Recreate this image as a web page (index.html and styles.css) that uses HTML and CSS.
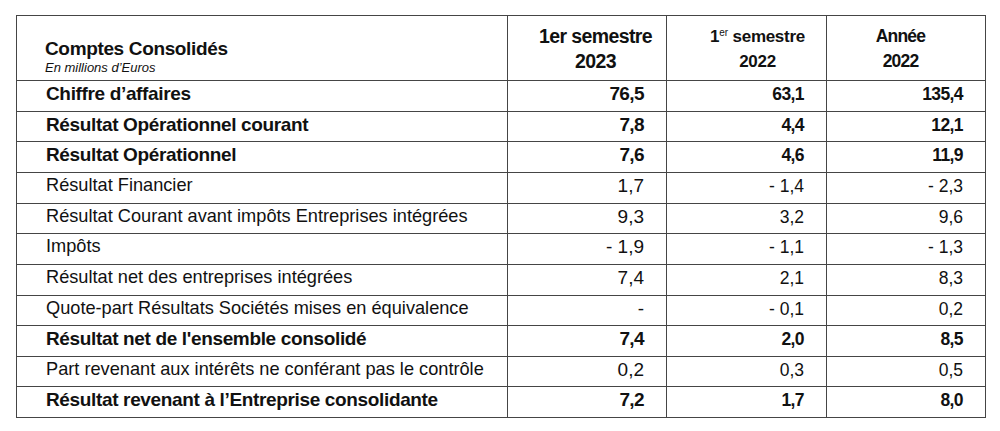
FILE: index.html
```html
<!DOCTYPE html>
<html lang="fr">
<head>
<meta charset="utf-8">
<title>Comptes Consolidés</title>
<link rel="stylesheet" href="styles.css">
</head>
<body>
<div class="fin">
  <div class="row head">
    <div class="cell title">
      <div class="title-main">Comptes Consolidés</div>
      <div class="title-sub">En millions d’Euros</div>
    </div>
    <div class="cell h1">1er semestre<br>2023</div>
    <div class="cell h2">1<span class="ord">er</span> semestre<br>2022</div>
    <div class="cell h3">Année<br>2022</div>
  </div>
  <div class="row b r31"><div class="cell lbl">Chiffre d’affaires</div><div class="cell n1">76,5</div><div class="cell n">63,1</div><div class="cell n">135,4</div></div>
  <div class="row b r30"><div class="cell lbl">Résultat Opérationnel courant</div><div class="cell n1">7,8</div><div class="cell n">4,4</div><div class="cell n">12,1</div></div>
  <div class="row b r31"><div class="cell lbl">Résultat Opérationnel</div><div class="cell n1">7,6</div><div class="cell n">4,6</div><div class="cell n">11,9</div></div>
  <div class="row r31"><div class="cell lbl">Résultat Financier</div><div class="cell n1">1,7</div><div class="cell n">- 1,4</div><div class="cell n">- 2,3</div></div>
  <div class="row r30"><div class="cell lbl">Résultat Courant avant impôts Entreprises intégrées</div><div class="cell n1">9,3</div><div class="cell n">3,2</div><div class="cell n">9,6</div></div>
  <div class="row r31"><div class="cell lbl">Impôts</div><div class="cell n1">- 1,9</div><div class="cell n">- 1,1</div><div class="cell n">- 1,3</div></div>
  <div class="row r31"><div class="cell lbl">Résultat net des entreprises intégrées</div><div class="cell n1">7,4</div><div class="cell n">2,1</div><div class="cell n">8,3</div></div>
  <div class="row r30"><div class="cell lbl">Quote-part Résultats Sociétés mises en équivalence</div><div class="cell n1">-</div><div class="cell n">- 0,1</div><div class="cell n">0,2</div></div>
  <div class="row b r31"><div class="cell lbl">Résultat net de l'ensemble consolidé</div><div class="cell n1">7,4</div><div class="cell n">2,0</div><div class="cell n">8,5</div></div>
  <div class="row r30"><div class="cell lbl">Part revenant aux intérêts ne conférant pas le contrôle</div><div class="cell n1">0,2</div><div class="cell n">0,3</div><div class="cell n">0,5</div></div>
  <div class="row b r31"><div class="cell lbl">Résultat revenant à l’Entreprise consolidante</div><div class="cell n1">7,2</div><div class="cell n">1,7</div><div class="cell n">8,0</div></div>
</div>
</body>
</html>
```

FILE: styles.css
```css
html, body {
  margin: 0;
  padding: 0;
  background: #ffffff;
}
body {
  padding: 15px 0 0 16px;
  font-family: "Liberation Sans", Arial, sans-serif;
  font-size: 19px;
  line-height: 20px;
  color: #111;
}
*, *::before, *::after {
  box-sizing: border-box;
}
.fin {
  width: 970px;
  display: flex;
  flex-direction: column;
  border-top: 1px solid #454545;
  border-left: 1px solid #454545;
}
.row {
  display: grid;
  grid-template-columns: 491px 159px 160px 159px;
}
.head { height: 65px; }
.r31 { height: 31px; }
.r30 { height: 30px; }
.cell {
  border-right: 1px solid #454545;
  border-bottom: 1px solid #454545;
  white-space: nowrap;
  overflow: hidden;
}
.head .cell {
  font-weight: bold;
}
.title {
  padding: 23px 0 0 28px;
}
.title-main {
  font-size: 19px;
  line-height: 20px;
  letter-spacing: -0.35px;
}
.title-sub {
  font-size: 13px;
  font-style: italic;
  font-weight: normal;
  line-height: 17px;
}
.h1, .h2, .h3 {
  text-align: center;
  line-height: 25px;
  padding-top: 8px;
}
.h1 {
  font-size: 19.5px;
  letter-spacing: -0.6px;
  padding-left: 17px;
}
.h2 {
  font-size: 17px;
  letter-spacing: -0.3px;
  padding-left: 22px;
}
.ord {
  font-size: 10px;
  font-weight: normal;
  letter-spacing: 0;
  vertical-align: 6px;
  line-height: 1px;
}
.h3 {
  font-size: 17.5px;
  letter-spacing: -0.8px;
  padding-right: 11px;
}
.lbl {
  padding-left: 29px;
  font-size: 18.2px;
  line-height: 25px;
}
.b .lbl {
  font-size: 19px;
  letter-spacing: -0.35px;
}
.n1, .n {
  text-align: right;
  padding-right: 22px;
}
.n1 {
  font-size: 19px;
  line-height: 25px;
}
.n {
  font-size: 17.5px;
  line-height: 26px;
}
.b .n1,
.b .n {
  letter-spacing: -0.6px;
}
.b .cell {
  font-weight: bold;
}
```
